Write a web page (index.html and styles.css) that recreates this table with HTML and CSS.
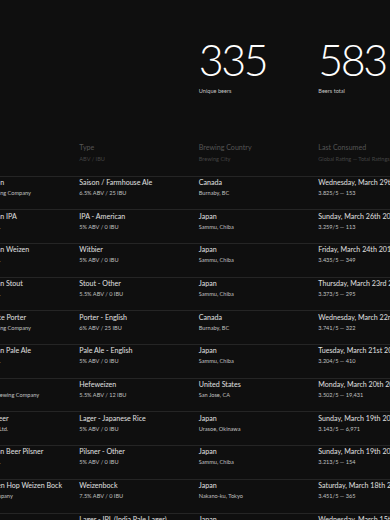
FILE: index.html
```html
<!DOCTYPE html>
<html lang="en">
<head>
<meta charset="utf-8">
<title>Beer log</title>
<link rel="stylesheet" href="styles.css">
</head>
<body>
<main class="page">
  <section class="stats">
    <div class="stat stat--unique">
      <div class="stat-value">335</div>
      <div class="stat-label">Unique beers</div>
    </div>
    <div class="stat stat--total">
      <div class="stat-value">583</div>
      <div class="stat-label">Beers total</div>
    </div>
  </section>

  <section class="table">
    <div class="row row--head">
      <div class="cell"><div class="main">Beer</div><div class="sub">Brewery</div></div>
      <div class="cell"><div class="main">Type</div><div class="sub">ABV / IBU</div></div>
      <div class="cell"><div class="main">Brewing Country</div><div class="sub">Brewing City</div></div>
      <div class="cell"><div class="main">Last Consumed</div><div class="sub">Global Rating — Total Ratings</div></div>
    </div>

    <div class="row">
      <div class="cell"><div class="main">Burnaby Saison</div><div class="sub">Four Winds Brewing Company</div></div>
      <div class="cell"><div class="main">Saison / Farmhouse Ale</div><div class="sub">6.5% ABV / 25 IBU</div></div>
      <div class="cell"><div class="main">Canada</div><div class="sub">Burnaby, BC</div></div>
      <div class="cell"><div class="main">Wednesday, March 29th 2017</div><div class="sub">3.825/5 — 153</div></div>
    </div>
    <div class="row">
      <div class="cell"><div class="main">Kujukuri Ocean IPA</div><div class="sub">Kujukuri Brew Co.</div></div>
      <div class="cell"><div class="main">IPA - American</div><div class="sub">5% ABV / 0 IBU</div></div>
      <div class="cell"><div class="main">Japan</div><div class="sub">Sammu, Chiba</div></div>
      <div class="cell"><div class="main">Sunday, March 26th 2017</div><div class="sub">3.259/5 — 113</div></div>
    </div>
    <div class="row">
      <div class="cell"><div class="main">Kujukuri Ocean Weizen</div><div class="sub">Kujukuri Brew Co.</div></div>
      <div class="cell"><div class="main">Witbier</div><div class="sub">5% ABV / 0 IBU</div></div>
      <div class="cell"><div class="main">Japan</div><div class="sub">Sammu, Chiba</div></div>
      <div class="cell"><div class="main">Friday, March 24th 2017</div><div class="sub">3.435/5 — 349</div></div>
    </div>
    <div class="row">
      <div class="cell"><div class="main">Kujukuri Ocean Stout</div><div class="sub">Kujukuri Brew Co.</div></div>
      <div class="cell"><div class="main">Stout - Other</div><div class="sub">5.5% ABV / 0 IBU</div></div>
      <div class="cell"><div class="main">Japan</div><div class="sub">Sammu, Chiba</div></div>
      <div class="cell"><div class="main">Thursday, March 23rd 2017</div><div class="sub">3.373/5 — 295</div></div>
    </div>
    <div class="row">
      <div class="cell"><div class="main">Dark Chocolate Porter</div><div class="sub">Four Winds Brewing Company</div></div>
      <div class="cell"><div class="main">Porter - English</div><div class="sub">6% ABV / 25 IBU</div></div>
      <div class="cell"><div class="main">Canada</div><div class="sub">Burnaby, BC</div></div>
      <div class="cell"><div class="main">Wednesday, March 22nd 2017</div><div class="sub">3.741/5 — 322</div></div>
    </div>
    <div class="row">
      <div class="cell"><div class="main">Kujukuri Ocean Pale Ale</div><div class="sub">Kujukuri Brew Co.</div></div>
      <div class="cell"><div class="main">Pale Ale - English</div><div class="sub">5% ABV / 0 IBU</div></div>
      <div class="cell"><div class="main">Japan</div><div class="sub">Sammu, Chiba</div></div>
      <div class="cell"><div class="main">Tuesday, March 21st 2017</div><div class="sub">3.204/5 — 410</div></div>
    </div>
    <div class="row">
      <div class="cell"><div class="main">Hefeweizen</div><div class="sub">The Hermitage Brewing Company</div></div>
      <div class="cell"><div class="main">Hefeweizen</div><div class="sub">5.5% ABV / 12 IBU</div></div>
      <div class="cell"><div class="main">United States</div><div class="sub">San Jose, CA</div></div>
      <div class="cell"><div class="main">Monday, March 20th 2017</div><div class="sub">3.502/5 — 19,431</div></div>
    </div>
    <div class="row">
      <div class="cell"><div class="main">Orion Draft Beer</div><div class="sub">Orion Breweries, Ltd.</div></div>
      <div class="cell"><div class="main">Lager - Japanese Rice</div><div class="sub">5% ABV / 0 IBU</div></div>
      <div class="cell"><div class="main">Japan</div><div class="sub">Urasoe, Okinawa</div></div>
      <div class="cell"><div class="main">Sunday, March 19th 2017</div><div class="sub">3.143/5 — 6,971</div></div>
    </div>
    <div class="row">
      <div class="cell"><div class="main">Kujukuri Ocean Beer Pilsner</div><div class="sub">Kujukuri Brew Co.</div></div>
      <div class="cell"><div class="main">Pilsner - Other</div><div class="sub">5% ABV / 0 IBU</div></div>
      <div class="cell"><div class="main">Japan</div><div class="sub">Sammu, Chiba</div></div>
      <div class="cell"><div class="main">Sunday, March 19th 2017</div><div class="sub">3.213/5 — 154</div></div>
    </div>
    <div class="row">
      <div class="cell"><div class="main">Nakano Golden Hop Weizen Bock</div><div class="sub">Nakano Beer Company</div></div>
      <div class="cell"><div class="main">Weizenbock</div><div class="sub">7.5% ABV / 0 IBU</div></div>
      <div class="cell"><div class="main">Japan</div><div class="sub">Nakano-ku, Tokyo</div></div>
      <div class="cell"><div class="main">Saturday, March 18th 2017</div><div class="sub">3.451/5 — 365</div></div>
    </div>
    <div class="row">
      <div class="cell"><div class="main">Ginga IPL</div><div class="sub">Ginga Kogen</div></div>
      <div class="cell"><div class="main">Lager - IPL (India Pale Lager)</div><div class="sub">6% ABV / 50 IBU</div></div>
      <div class="cell"><div class="main">Japan</div><div class="sub">Sammu, Chiba</div></div>
      <div class="cell"><div class="main">Wednesday, March 15th 2017</div><div class="sub">3.512/5 — 208</div></div>
    </div>
  </section>
</main>
</body>
</html>
```

FILE: styles.css
```css
html, body {
  margin: 0;
  padding: 0;
  overflow: hidden;
  background: #0f0f0f;
}

body {
  font-family: Lato, "Open Sans", "Liberation Sans", sans-serif;
  color: #dcdcdc;
}

.page {
  width: 620px;
  margin-left: -43.7px;
}

.stats,
.row {
  display: grid;
  grid-template-columns: 123px 119.5px 119.5px 119.5px;
}

.stats {
  padding-top: 38px;
}

.stat--unique { grid-column: 3; }
.stat--total { grid-column: 4; }

.stat-value {
  font-size: 43px;
  line-height: 43px;
  font-weight: 300;
  color: #ffffff;
  letter-spacing: -2.5px;
}

.stat-label {
  margin-top: 6px;
  font-size: 5.6px;
  line-height: 8px;
  color: #c4c4c4;
}

.table {
  margin-top: 47.7px;
}

.row {
  border-top: 1px solid #252525;
  padding: 1.3px 0 12.4px;
  white-space: nowrap;
}

.row--head {
  border-top: 0;
  padding: 0 0 12.7px;
}

.main {
  font-size: 7.1px;
  line-height: 10px;
  color: #e0e0e0;
}

.sub {
  margin-top: 1px;
  font-size: 5.6px;
  line-height: 8px;
  color: #c0c0c0;
}

.row--head .main { color: #555555; }
.row--head .sub { margin-top: 2.3px; color: #444444; }
```
